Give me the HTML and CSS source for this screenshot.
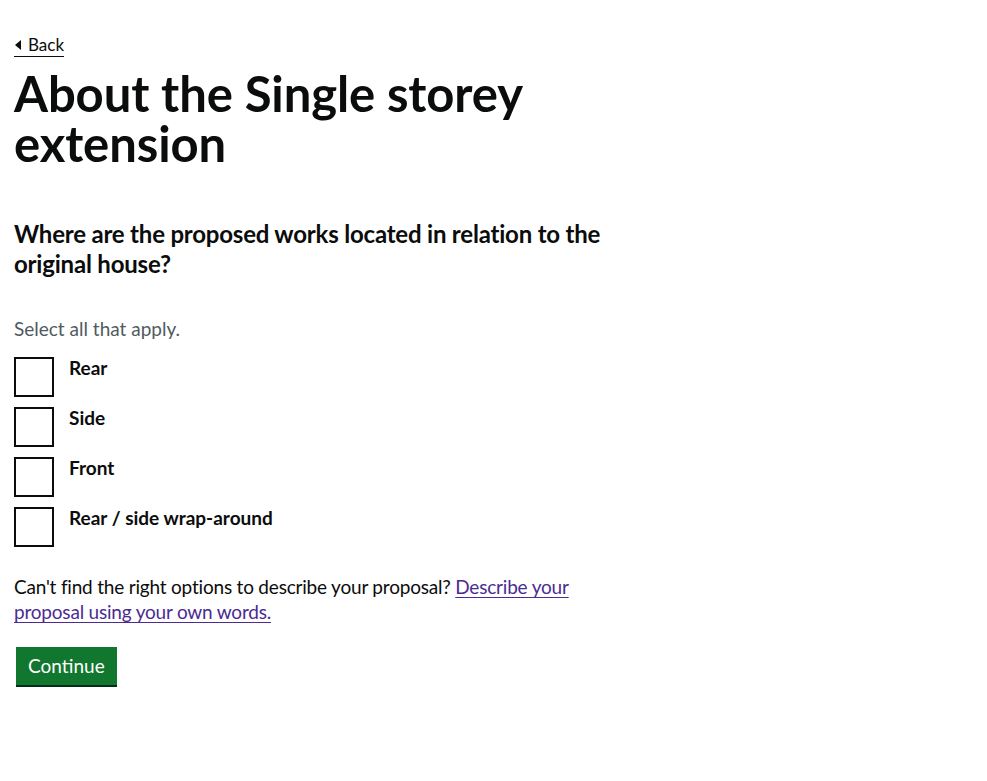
FILE: index.html
```html
<!DOCTYPE html>
<html lang="en">
<head>
<meta charset="utf-8">
<title>About the Single storey extension</title>
<link rel="stylesheet" href="styles.css">
</head>
<body>
<div class="container">
  <a class="back-link" href="#">Back</a>
  <main class="main">
    <h1 class="heading-xl">About the Single storey extension</h1>
    <form class="form">
      <fieldset class="fieldset">
        <legend class="legend">Where are the proposed works located in relation to the original house?</legend>
        <div class="hint">Select all that apply.</div>
        <div class="checkboxes">
          <div class="checkbox-item">
            <input class="checkbox-input" type="checkbox" id="c1">
            <label class="checkbox-label" for="c1">Rear</label>
          </div>
          <div class="checkbox-item">
            <input class="checkbox-input" type="checkbox" id="c2">
            <label class="checkbox-label" for="c2">Side</label>
          </div>
          <div class="checkbox-item">
            <input class="checkbox-input" type="checkbox" id="c3">
            <label class="checkbox-label" for="c3">Front</label>
          </div>
          <div class="checkbox-item">
            <input class="checkbox-input" type="checkbox" id="c4">
            <label class="checkbox-label" for="c4">Rear / side wrap-around</label>
          </div>
        </div>
      </fieldset>
      <p class="body">Can't find the right options to describe your proposal? <a class="link" href="#">Describe your proposal using your own words.</a></p>
      <button class="button" type="button">Continue</button>
    </form>
  </main>
</div>
</body>
</html>
```

FILE: styles.css
```css
* { box-sizing: border-box; }
body {
  margin: 0;
  background: #fff;
  color: #0b0c0c;
  font-family: Lato, "Noto Sans", "Liberation Sans", sans-serif;
}
.container {
  padding: 34px 14px 40px 14px;
  width: 640px;
}
.back-link {
  display: inline-block;
  position: relative;
  font-size: 17px;
  line-height: 22px;
  color: #0b0c0c;
  text-decoration: none;
  padding-left: 14px;
  border-bottom: 1px solid #0b0c0c;
}
.back-link::before {
  content: "";
  position: absolute;
  left: 1px;
  top: 6px;
  border-style: solid;
  border-width: 5px 6px 5px 0;
  border-color: transparent #0b0c0c transparent transparent;
}
.main { padding-top: 11px; }
.heading-xl {
  margin: 0 0 51px 0;
  font-size: 49px;
  line-height: 50px;
  font-weight: 700;
  letter-spacing: -0.1px;
}
.form { margin: 0; }
.fieldset {
  margin: 0;
  padding: 0;
  border: 0;
  min-width: 0;
}
.legend {
  padding: 0;
  margin-bottom: 37px;
  font-size: 24px;
  line-height: 30px;
  font-weight: 700;
  letter-spacing: -0.2px;
}
.hint {
  font-size: 19px;
  line-height: 25px;
  color: #505a5f;
  margin-bottom: 16px;
}
.checkboxes {
  display: flex;
  flex-direction: column;
  gap: 10px;
}
.checkbox-item {
  display: flex;
  align-items: flex-start;
  min-height: 40px;
}
.checkbox-input {
  appearance: none;
  -webkit-appearance: none;
  margin: 0;
  width: 40px;
  height: 40px;
  border: 2px solid #0b0c0c;
  background: #fff;
  flex: none;
}
.checkbox-label {
  font-size: 19px;
  line-height: 25px;
  font-weight: 700;
  padding: 0 15px;
  margin-top: -2px;
}
.body {
  margin: 27px 0 23px 0;
  font-size: 19px;
  line-height: 25px;
  letter-spacing: -0.2px;
}
.link {
  color: #4c2c92;
  text-decoration: underline;
  text-underline-offset: 3px;
  text-decoration-thickness: 1px;
}
.button {
  margin-left: 2px;
  display: inline-block;
  font-family: inherit;
  font-size: 19px;
  line-height: 25px;
  color: #fff;
  background: #11772f;
  border: 0;
  padding: 6px 12px 7px 12px;
  box-shadow: 0 2px 0 #002d18;
  border-radius: 0;
  cursor: pointer;
}
```
